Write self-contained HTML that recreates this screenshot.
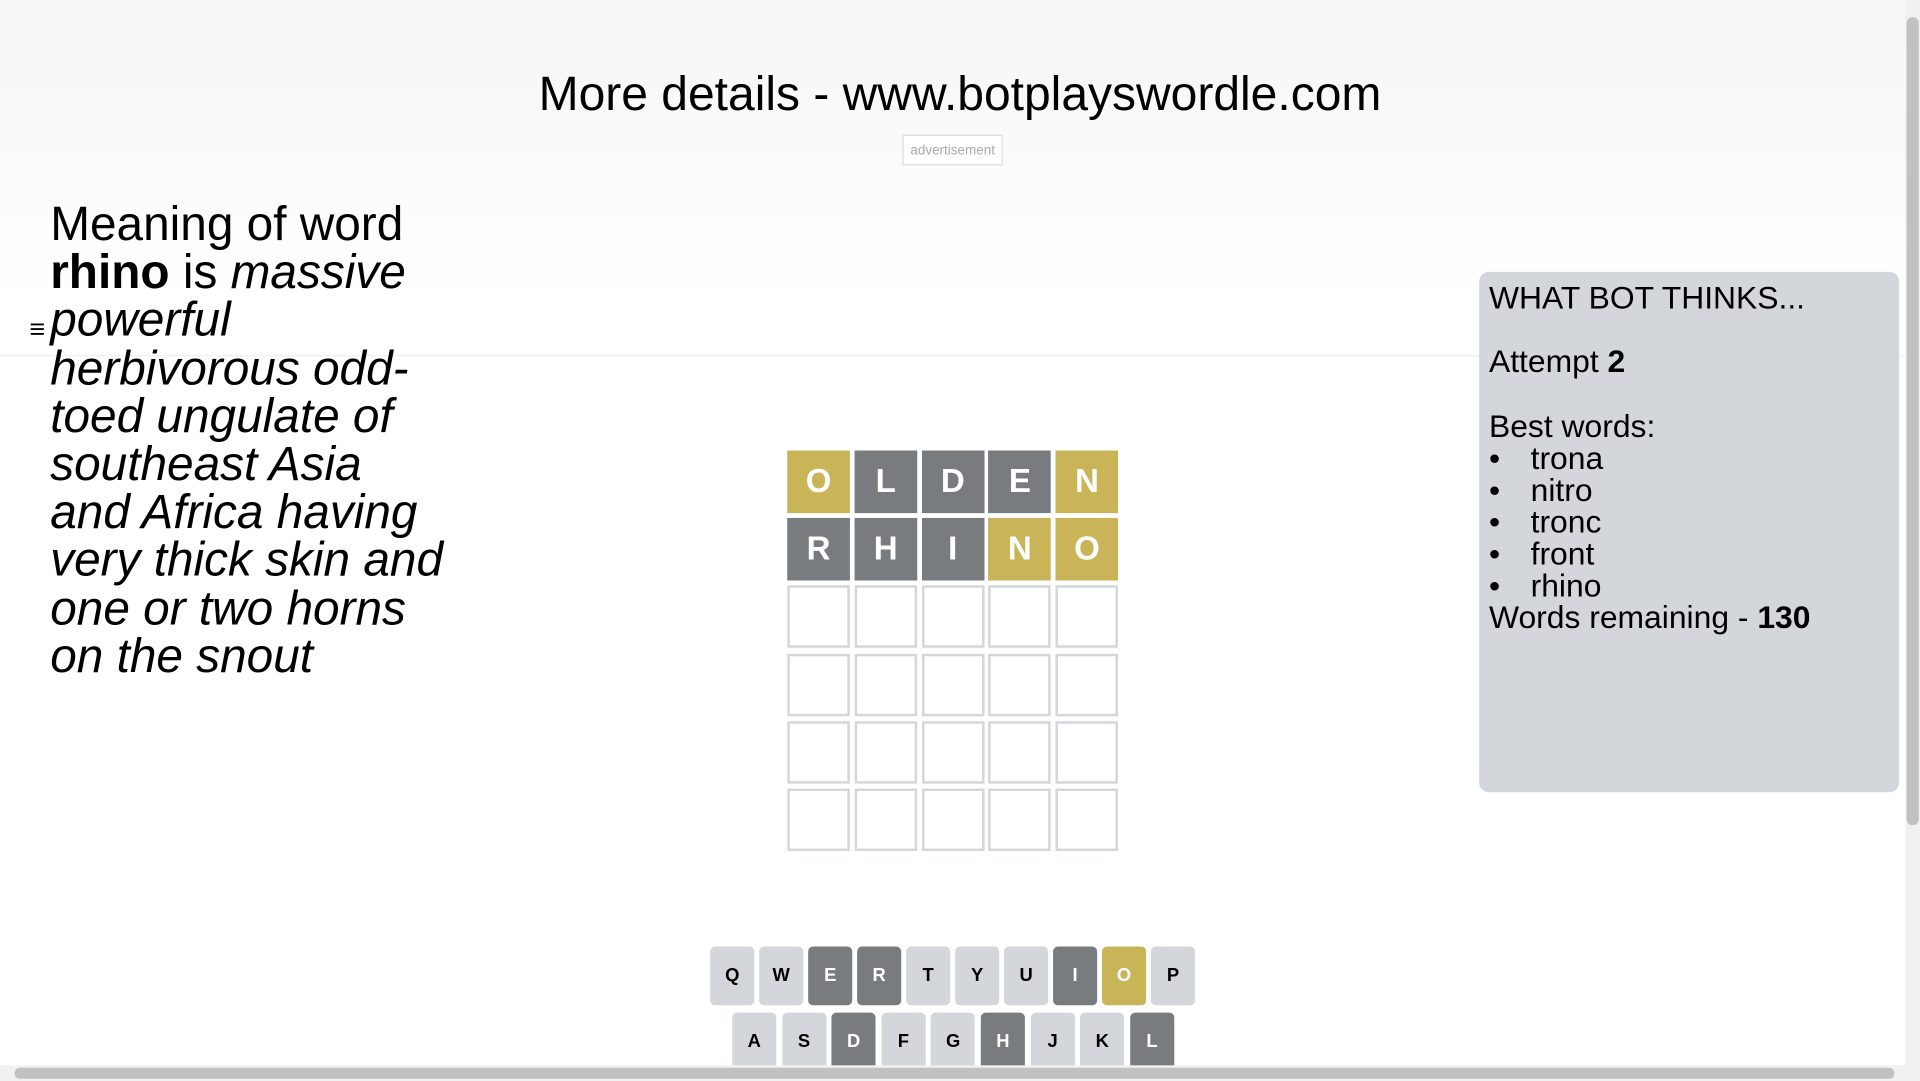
<!DOCTYPE html>
<html><head><style>
html,body{margin:0;padding:0;width:1920px;height:1080px;overflow:hidden;background:#fff}
#w{position:absolute;left:0;top:0;width:1568px;height:883px;transform:scale(1.22449);transform-origin:0 0;font-family:"Liberation Sans",sans-serif;overflow:hidden}
.hdr{position:absolute;left:0;top:0;width:1556px;height:245px;background:linear-gradient(#f6f6f6,#fff)}
.title{position:absolute;left:0;width:1568px;top:56px;text-align:center;font-size:39.2px;color:#000}
.ad{position:absolute;left:737px;top:110px;width:80px;height:23px;border:1px solid #ddd;background:#fff;font-size:11px;color:#aaa;text-align:center;line-height:24px}
.nav{position:absolute;left:0;top:245px;width:1556px;height:45px;background:#fff;border-bottom:1px solid #eee}
.ham{position:absolute;left:24px;top:256px;font-size:22px}
.mean{position:absolute;left:41px;top:164px;width:326px;font-size:39px;line-height:39.2px;color:#000}
.t{position:absolute;width:47px;height:47px;border:2px solid #d3d6da;box-sizing:content-box;font-weight:bold;font-size:27px;color:#fff;text-align:center;line-height:47px}
.y{background:#c9b458;border-color:#c9b458}.g{background:#787c7e;border-color:#787c7e}
.panel{position:absolute;left:1208px;top:222px;width:343px;height:425px;background:#d3d6da;border-radius:8px;font-size:26px;color:#000}
.panel div{position:absolute;left:8px}
.panel span{position:absolute;left:34px}
.k{position:absolute;width:36px;height:48px;border-radius:4px;background:#d3d6da;font-weight:bold;font-size:15px;text-align:center;line-height:48px;color:#000}
.k.g{background:#787c7e;color:#fff}.k.y{background:#c9b458;color:#fff}
.vs{position:absolute;left:1556px;top:0;width:12px;height:870px;background:#f1f1f1}
.vs i{position:absolute;left:1px;top:14px;width:10px;height:660px;background:#c1c1c1;border-radius:5px}
.hs{position:absolute;left:0;top:870px;width:1568px;height:13px;background:#f1f1f1}
.hs i{position:absolute;left:12px;top:2px;width:1535px;height:9px;background:#c1c1c1;border-radius:4px}
</style></head><body><div id="w">
<div class="hdr"></div>
<div class="title">More details - www.botplayswordle.com</div>
<div class="ad">advertisement</div>
<div class="nav"></div>
<div class="ham">≡</div>
<div class="mean">Meaning of word <b>rhino</b> is <i>massive powerful herbivorous odd-toed ungulate of southeast Asia and Africa having very thick skin and one or two horns on the snout</i></div>
<div id="g"></div>
<div class="panel">
<div style="top:6px">WHAT BOT THINKS...</div>
<div style="top:58px">Attempt <b>2</b></div>
<div style="top:111px">Best words:</div>
<div style="top:137px">•<span>trona</span></div>
<div style="top:163px">•<span>nitro</span></div>
<div style="top:189px">•<span>tronc</span></div>
<div style="top:215px">•<span>front</span></div>
<div style="top:241px">•<span>rhino</span></div>
<div style="top:267px">Words remaining - <b>130</b></div>
</div>
<div id="kb"></div>
<div class="vs"><i></i></div>
<div class="hs"><i></i></div>
</div>
<script>
var rows=[["O","y"],["L","g"],["D","g"],["E","g"],["N","y"],["R","g"],["H","g"],["I","g"],["N","y"],["O","y"]];
var h="";
for(var r=0;r<6;r++)for(var c=0;c<5;c++){var d=rows[r*5+c];h+='<div class="t '+(d?d[1]:'')+'" style="left:'+(643+c*54.8)+'px;top:'+(368+r*55.2)+'px">'+(d?d[0]:'')+'</div>';}
document.getElementById('g').innerHTML=h;
var k1="QWERTYUIOP",s1={E:"g",R:"g",I:"g",O:"y"},k2="ASDFGHJKL",s2={D:"g",H:"g",L:"g"},k="";
for(var i=0;i<10;i++)k+='<div class="k '+(s1[k1[i]]||'')+'" style="left:'+(580+i*40)+'px;top:773px">'+k1[i]+'</div>';
for(var i=0;i<9;i++)k+='<div class="k '+(s2[k2[i]]||'')+'" style="left:'+(598+i*40.6)+'px;top:827px">'+k2[i]+'</div>';
document.getElementById('kb').innerHTML=k;
</script>
</body></html>
